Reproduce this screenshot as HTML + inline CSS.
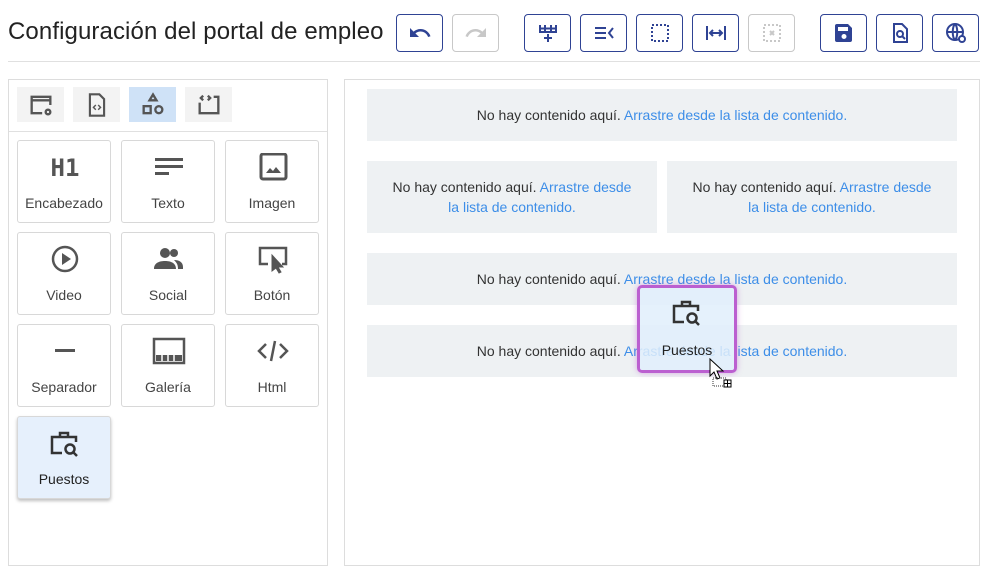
<!DOCTYPE html>
<html><head><meta charset="utf-8"><style>
*{box-sizing:border-box;margin:0;padding:0}
body{width:988px;height:573px;background:#fff;font-family:"Liberation Sans",sans-serif;position:relative;overflow:hidden;color:#333}
.abs{position:absolute}
h1{position:absolute;left:8px;top:18px;font-size:24px;font-weight:400;color:#222;letter-spacing:0.1px}
.btn{position:absolute;top:14px;width:47px;height:38px;border:1px solid #2f4394;border-radius:4px;display:flex;align-items:center;justify-content:center;background:#fff}
.btn.dis{border-color:#c8c8c8}
.tab{position:absolute;top:87px;width:47px;height:35px;background:#f3f3f3;display:flex;align-items:center;justify-content:center}
.tile{position:absolute;width:94px;height:83px;border:1px solid #d8d8d8;border-radius:3px;background:#fff;text-align:center;font-size:14px;color:#444}
.tile svg{position:absolute;left:30px;top:12px}
.tile span{position:absolute;left:0;right:0;top:54px}
.drop{position:absolute;background:#eef1f3;font-size:14px;color:#333;display:flex;align-items:center;justify-content:center;text-align:center;line-height:20px}
.drop b{font-weight:400;color:#3d8ee8}
</style></head><body>
<h1>Configuración del portal de empleo</h1>
<div class="btn" style="left:396px"><svg width="24" height="24" viewBox="0 0 24 24"><path d="M12.5 8c-2.6 0-5 1-6.9 2.6L2 7v9h9l-3.6-3.6c1.4-1.2 3.2-1.9 5.1-1.9 3.5 0 6.5 2.3 7.6 5.5l2.4-.8C21 11 17.1 8 12.5 8z" fill="#2f4394"/></svg></div>
<div class="btn dis" style="left:452px"><svg width="24" height="24" viewBox="0 0 24 24"><path d="M11.5 8c2.6 0 5 1 6.9 2.6L22 7v9h-9l3.6-3.6c-1.4-1.2-3.2-1.9-5.1-1.9-3.5 0-6.5 2.3-7.6 5.5L1.5 15.2C3 11 6.9 8 11.5 8z" fill="#c8c8c8"/></svg></div>
<div class="btn" style="left:524px"><svg width="24" height="24" viewBox="0 0 24 24" fill="none" stroke="#2f4394" stroke-width="2"><path d="M4 4v7h16V4M4 7.5h16M9 4v7M15 4v7M12 13v8M8 17h8"/></svg></div>
<div class="btn" style="left:580px"><svg width="24" height="24" viewBox="0 0 24 24" fill="none" stroke="#2f4394" stroke-width="2"><path d="M3 7h11M3 12h11M3 17h11M21 7l-4 5 4 5"/></svg></div>
<div class="btn" style="left:636px"><svg width="24" height="24" viewBox="0 0 24 24" fill="none" stroke="#2f4394" stroke-width="2" stroke-dasharray="2 2"><rect x="4" y="4" width="16" height="16"/></svg></div>
<div class="btn" style="left:692px"><svg width="24" height="24" viewBox="0 0 24 24" fill="none" stroke="#2f4394" stroke-width="2"><path d="M3 5v14M21 5v14M6 12h12M9 9l-3 3 3 3M15 9l3 3-3 3"/></svg></div>
<div class="btn dis" style="left:748px"><svg width="24" height="24" viewBox="0 0 24 24" fill="none" stroke="#c8c8c8" stroke-width="2"><rect x="4" y="4" width="16" height="16" stroke-dasharray="2 2"/><path d="M10 10l4 4M14 10l-4 4"/></svg></div>
<div class="btn" style="left:820px"><svg width="24" height="24" viewBox="0 0 24 24"><path d="M5 3h11l4 4v12a2 2 0 0 1-2 2H5a2 2 0 0 1-2-2V5a2 2 0 0 1 2-2zm1 3v4h10V6zm6 7a2.5 2.5 0 1 0 0 5 2.5 2.5 0 0 0 0-5z" fill="#2f4394" fill-rule="evenodd"/></svg></div>
<div class="btn" style="left:876px"><svg width="24" height="24" viewBox="0 0 24 24" fill="none" stroke="#2f4394" stroke-width="2"><path d="M6 3h8l5 5v13H6z"/><circle cx="12" cy="13" r="3"/><path d="M14 15l3 3"/></svg></div>
<div class="btn" style="left:932px"><svg width="24" height="24" viewBox="0 0 24 24" fill="none" stroke="#2f4394" stroke-width="2"><circle cx="11" cy="11" r="8"/><path d="M3 11h16M11 3c-3 3-3 13 0 16M11 3c3 3 3 13 0 16"/><circle cx="18" cy="18" r="3" fill="#fff"/></svg></div>
<div class="abs" style="left:8px;top:61px;width:972px;height:1px;background:#e0e0e0"></div>

<div class="abs" style="left:8px;top:79px;width:320px;height:487px;border:1px solid #ddd"></div>
<div class="tab" style="left:17px"><svg width="28" height="28" viewBox="0 0 24 24" fill="none" stroke="#555" stroke-width="2"><path d="M13 19H4V5h16v7M4 8h16"/><circle cx="18" cy="18" r="2"/></svg></div>
<div class="tab" style="left:73px"><svg width="24" height="26" viewBox="0 0 20 22" fill="none" stroke="#555" stroke-width="1.8"><path d="M4 2h8l4 4v14H4z"/><path d="M9 11l-2 2 2 2M11 11l2 2-2 2" stroke-width="1.2"/></svg></div>
<div class="tab" style="left:129px;background:#cfe2f7"><svg width="28" height="28" viewBox="0 0 24 24" fill="none" stroke="#555" stroke-width="2"><path d="M12 3l3 5H9z"/><rect x="4" y="13" width="6" height="6"/><circle cx="17" cy="16" r="3"/></svg></div>
<div class="tab" style="left:185px"><svg width="28" height="28" viewBox="0 0 24 24" fill="none" stroke="#555" stroke-width="2"><path d="M4 10V19h16V5h-4M7 4L5 6l2 2M11 4l2 2-2 2"/></svg></div>
<div class="abs" style="left:9px;top:131px;width:318px;height:1px;background:#e0e0e0"></div>

<div class="tile" style="left:17px;top:140px"><svg width="34" height="28" viewBox="0 0 34 28"><text x="17" y="23" text-anchor="middle" font-family="DejaVu Sans Mono" font-weight="bold" font-size="24" fill="#555">H1</text></svg><span>Encabezado</span></div>
<div class="tile" style="left:121px;top:140px"><svg width="34" height="28" viewBox="0 0 34 28" fill="#555"><rect x="3" y="5" width="28" height="3"/><rect x="3" y="12" width="28" height="3"/><rect x="3" y="19" width="14" height="3"/></svg><span>Texto</span></div>
<div class="tile" style="left:225px;top:140px"><svg width="34" height="28" viewBox="0 0 34 28"><rect x="5" y="1" width="25" height="25" rx="2" fill="none" stroke="#555" stroke-width="3"/><path d="M10 20l4-5 3 3 3-4 5 6z" fill="#555"/></svg><span>Imagen</span></div>
<div class="tile" style="left:17px;top:232px"><svg width="34" height="28" viewBox="0 0 34 28"><circle cx="17" cy="14" r="12" fill="none" stroke="#555" stroke-width="2.5"/><path d="M14 8v12l9-6z" fill="#555"/></svg><span>Video</span></div>
<div class="tile" style="left:121px;top:232px"><svg width="34" height="28" viewBox="0 0 34 28" fill="#555"><circle cx="13" cy="8" r="5"/><circle cx="22" cy="8" r="4"/><path d="M2 24c0-6 5-8 11-8s11 2 11 8zM22 15c5 0 9 2 9 7v2h-5c0-4-1-6-4-9z"/></svg><span>Social</span></div>
<div class="tile" style="left:225px;top:232px"><svg width="34" height="30" viewBox="0 0 34 30" fill="none" stroke="#555" stroke-width="2.5"><path d="M12 19H4V3h26v16h-4"/><path d="M16 10v16l4-3 3 5 2-1-3-5h5z" fill="#555" stroke-width="1"/></svg><span>Botón</span></div>
<div class="tile" style="left:17px;top:324px"><svg width="34" height="28" viewBox="0 0 34 28"><rect x="7" y="12" width="20" height="3" fill="#555"/></svg><span>Separador</span></div>
<div class="tile" style="left:121px;top:324px"><svg width="34" height="28" viewBox="0 0 34 28"><rect x="2" y="2" width="30" height="24" fill="none" stroke="#555" stroke-width="2.5"/><path d="M4 18h26v6H4z" fill="#555"/><path d="M10 18v6M16 18v6M22 18v6" stroke="#fff" stroke-width="1.5"/></svg><span>Galería</span></div>
<div class="tile" style="left:225px;top:324px"><svg width="34" height="28" viewBox="0 0 34 28" fill="none" stroke="#555" stroke-width="2.5"><path d="M10 7l-7 7 7 7M24 7l7 7-7 7M19 4l-4 20"/></svg><span>Html</span></div>
<div class="tile" style="left:17px;top:416px;background:#e6f0fc;box-shadow:0 2px 3px rgba(0,0,0,.25)"><svg width="34" height="30" viewBox="0 0 34 30" fill="none" stroke="#333" stroke-width="2.5"><path d="M14 24H4V8h24v5M12 8V4h8v4"/><circle cx="22" cy="20" r="4.5"/><path d="M25 23l4 4"/></svg><span style="color:#222">Puestos</span></div>

<div class="abs" style="left:344px;top:79px;width:636px;height:487px;border:1px solid #ddd"></div>
<div class="drop" style="left:367px;top:89px;width:590px;height:52px"><span>No hay contenido aquí. <b>Arrastre desde la lista de contenido.</b></span></div>
<div class="drop" style="left:367px;top:161px;width:290px;height:72px;padding:0 22px"><span>No hay contenido aquí. <b>Arrastre desde la lista de contenido.</b></span></div>
<div class="drop" style="left:667px;top:161px;width:290px;height:72px;padding:0 22px"><span>No hay contenido aquí. <b>Arrastre desde la lista de contenido.</b></span></div>
<div class="drop" style="left:367px;top:253px;width:590px;height:52px"><span>No hay contenido aquí. <b>Arrastre desde la lista de contenido.</b></span></div>
<div class="drop" style="left:367px;top:325px;width:590px;height:52px"><span>No hay contenido aquí. <b>Arrastre desde la lista de contenido.</b></span></div>

<div class="abs" style="left:637px;top:285px;width:100px;height:88px;border:3px solid #bb5fd0;border-radius:5px;background:rgba(225,238,252,.85);box-shadow:0 0 6px rgba(187,95,208,.5);text-align:center;font-size:14px;color:#222">
<svg class="abs" style="left:30px;top:10px" width="34" height="30" viewBox="0 0 34 30" fill="none" stroke="#333" stroke-width="2.5"><path d="M14 24H4V8h24v5M12 8V4h8v4"/><circle cx="22" cy="20" r="4.5"/><path d="M25 23l4 4"/></svg>
<span class="abs" style="left:0;right:0;top:54px">Puestos</span></div>
<svg class="abs" style="left:708px;top:358px" width="26" height="32" viewBox="0 0 26 32"><path d="M2 1v17l4-4 3 7 3-1-3-7h6z" fill="#fff" stroke="#000" stroke-width="1"/><rect x="5" y="20" width="13" height="8" fill="none" stroke="#333" stroke-dasharray="1 1"/><rect x="16" y="22" width="7" height="7" fill="#fff" stroke="#000"/><path d="M19.5 22v7M16 25.5h7" stroke="#000"/></svg>
</body></html>
